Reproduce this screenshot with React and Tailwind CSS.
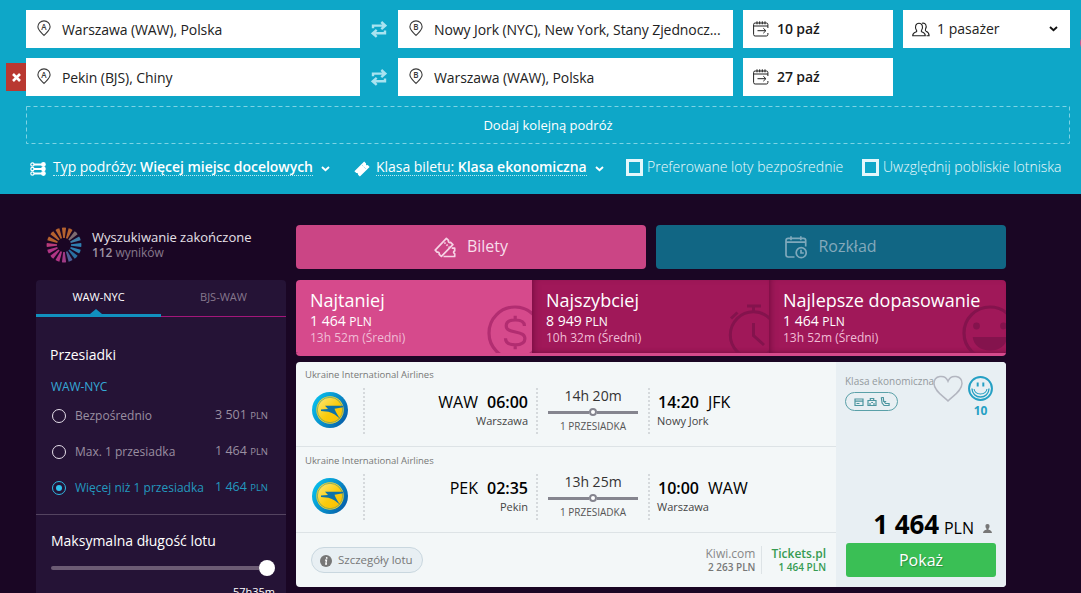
import React from "react";

const stops = [
  { label: "Bezpośrednio", price: "3 501" },
  { label: "Max. 1 przesiadka", price: "1 464" },
  { label: "Więcej niż 1 przesiadka", price: "1 464", active: true },
];

const flights = [
  { from: "WAW", dep: "06:00", fromCity: "Warszawa", time: "14h 20m", arr: "14:20", to: "JFK", toCity: "Nowy Jork" },
  { from: "PEK", dep: "02:35", fromCity: "Pekin", time: "13h 25m", arr: "10:00", to: "WAW", toCity: "Warszawa" },
];

const loaderColors = [
  "#b5622f", "#b5622f", "#7d6b70", "#3f7da6", "#2f7fb0", "#2f7fb0", "#2a6fa0", "#4d5f96",
  "#a03a86", "#b03585", "#b03585", "#b03585", "#b83a7a", "#b5622f", "#b5622f", "#b5622f",
];

const PinIcon = ({ letter }) => (
  <svg width="14" height="17" viewBox="0 0 14 17" fill="none" className="-mt-px shrink-0">
    <path d="M7 .9C3.500 .9 .9 3.500 .9 6.700c0 3.300 3.100 5.400 6.100 8.700 3-3.300 6.100-5.400 6.100-8.700C13.100 3.500 10.500 .9 7 .9z" stroke="#3a3a3a" strokeWidth="1.1" />
    <text x="7" y="9.600" textAnchor="middle" fontSize="8" fontWeight="600" fill="#3a3a3a" fontFamily="Open Sans">
      {letter}
    </text>
  </svg>
);

const SwapIcon = () => (
  <svg width="16" height="17" viewBox="0 0 16 17" fill="none" stroke="#a9e3f0" strokeWidth="2.400" className="shrink-0">
    <path d="M2 7.200V4.600h12M10.300 1l4 3.600-4 3.600M14 9.600v2.700H2M5.700 8.800l-4 3.500 4 3.500" />
  </svg>
);

const CalendarIcon = () => (
  <svg width="16" height="16" viewBox="0 0 16 16" fill="none" stroke="#222" className="shrink-0">
    <path d="M.6 12V3.500q0-1.500 1.500-1.500h11.300q1.500 0 1.500 1.500V7M.6 12v1.500q0 1.500 1.500 1.500h11.300q1.500 0 1.500-1.500V12M.6 5h14.300M4 .3v3M6.700 .3v3M9.300 .3v3M12 .3v3" strokeWidth="1" />
    <path d="M4.500 9.700h8M10.300 7.200l2.600 2.500-2.600 2.500" strokeWidth="1" />
  </svg>
);

const PeopleIcon = () => (
  <svg width="18" height="15" viewBox="0 0 18 15" fill="none" stroke="#222" strokeWidth="1.100" className="shrink-0">
    <path d="M.7 13.700c0-2.500 1.300-2.900 3.300-3.700.8-.4 1-1 .4-1.800C2.600 5.400 3.500 1.200 7 1.200s4.400 4.200 2.600 7c-.5.800-.4 1.400.4 1.800 2 .8 3.300 1.200 3.300 3.700z" />
    <path d="M10 1.300c3.400-.8 5.300 2 3.500 6-.4.900-.2 1.500.6 1.900 1.900.8 3 1.700 3 4.500h-2.600" />
  </svg>
);

const Chevron = ({ color }) => (
  <svg width="9" height="6" viewBox="0 0 9 6" fill="none" className="shrink-0">
    <path d="M1 1l3.500 3.200L8 1" stroke={color} strokeWidth="1.900" />
  </svg>
);

const RouteIcon = () => (
  <svg width="16" height="14" viewBox="0 0 16 14" className="shrink-0">
    <path d="M2.500 2.500h10.500M2.500 7h10.500M2.500 11.500h10.500" stroke="#fff" strokeWidth="2.200" />
    {[2.500, 7, 11.500].map((y) => (
      <g key={y}>
        <circle cx="2.400" cy={y} r="1.600" fill="#0ea7c8" stroke="#fff" strokeWidth="1.200" />
        <circle cx="13.400" cy={y} r="2.400" fill="#fff" />
      </g>
    ))}
  </svg>
);

const TicketIcon = () => (
  <svg width="16" height="16" viewBox="0 0 16 16" className="shrink-0">
    <path d="M.4 10.200L10.200 .5l1.900 1.900c-.5 1.200.5 2.200 1.700 1.700l1.800 1.900-9.700 9.600-1.900-1.800c.5-1.200-.5-2.300-1.700-1.700z" fill="#fff" />
    <path d="M8.300 4.300l3.700 3.700" stroke="#7fcfe2" strokeWidth=".9" strokeDasharray="1.200 1" />
  </svg>
);

const Loader = () => (
  <svg width="36" height="36" viewBox="-18 -18 36 36">
    {loaderColors.map((color, i) => (
      <path key={i} d="M-.8 -7L-2.100 -17.200Q0 -17.700 2.100 -17.200L.8 -7z" fill={color} transform={`rotate(${i * 22.5})`} />
    ))}
  </svg>
);

const TicketsIcon = () => (
  <svg width="22" height="21" viewBox="0 0 22 21" fill="none" stroke="#f6d3e5" strokeWidth="1.700" strokeLinejoin="round">
    <path d="M1.200 13.100L12.400 1.300l2.100 2c-.5 1.500.6 2.600 2.100 2.100l2.300 2.200L7.400 19.400l-2.200-2c.5-1.500-.7-2.700-2.100-2.200z" />
    <path d="M10.400 5.500l4.800 4.700" strokeDasharray="1.600 1.300" />
    <path d="M9.500 19.500h11.200v-2.800c-1.500-.5-1.500-2.300 0-2.800v-2.700h-3" />
  </svg>
);

const ScheduleIcon = () => (
  <svg width="22" height="23" viewBox="0 0 22 23" fill="none" stroke="#7fa9bc" strokeWidth="1.700">
    <path d="M9.500 21H3.200Q1 21 1 18.800V4.500q0-2.200 2.200-2.200h15.300q2.200 0 2.200 2.200v6M1 6.200h19.700M6 .3v4M15.800 .3v4" />
    <circle cx="16.200" cy="16.700" r="5" />
    <path d="M16 13.700v3.300h2.800" />
  </svg>
);

const DollarArt = () => (
  <svg width="56" height="56" viewBox="0 0 56 56" fill="none" stroke="#b22d71" strokeWidth="3.200" className="absolute -right-[11px] top-[25px]">
    <circle cx="28" cy="28" r="26" />
    <path d="M37.500 21c0-3.800-3-6-9.300-6-6 0-9 2.300-9 5.800 0 4 3.200 5 9.200 6.200 6.500 1.300 9.500 2.700 9.500 6.800 0 4.200-3.600 6-9.700 6-6.300 0-9.700-2.400-9.700-6.500M28.200 10.800v4M28.200 39.700v4.500" />
  </svg>
);

const TimerArt = () => (
  <svg width="56" height="56" viewBox="0 0 56 56" fill="none" stroke="#84134d" strokeWidth="3" className="absolute -right-[15px] top-[24px]">
    <circle cx="25.500" cy="31" r="23.200" />
    <path d="M19 2h14M25.500 2v6M3 14.500l6.500-6M25.500 19v12.500L36 41" />
  </svg>
);

const SmileArt = () => (
  <svg width="56" height="56" viewBox="0 0 56 56" className="absolute -right-[12px] top-[25px]">
    <circle cx="28" cy="28" r="26" fill="none" stroke="#84134d" strokeWidth="3.200" />
    <circle cx="14.500" cy="21" r="3.400" fill="#84134d" />
    <circle cx="41.500" cy="21" r="3.400" fill="#84134d" />
    <path d="M10.700 32h34.600c-1 8.700-8 13.500-17.300 13.500S11.700 40.700 10.700 32z" fill="#84134d" />
  </svg>
);

const AirlineLogo = () => (
  <svg width="36" height="36" viewBox="0 0 36 36">
    <defs>
      <linearGradient id="ring" x1="0" y1=".2" x2="1" y2=".8">
        <stop offset="0" stopColor="#08c2ee" />
        <stop offset="1" stopColor="#075ba6" />
      </linearGradient>
      <linearGradient id="disc" x1="0" y1="0" x2="1" y2="1">
        <stop offset="0" stopColor="#fbe97c" />
        <stop offset=".55" stopColor="#fbcb0b" />
        <stop offset="1" stopColor="#f9bd00" />
      </linearGradient>
    </defs>
    <circle cx="18" cy="18" r="18" fill="url(#ring)" />
    <circle cx="18" cy="18" r="13.700" fill="#f5d638" />
    <circle cx="18" cy="18" r="12.700" fill="url(#disc)" stroke="#5f9a6c" strokeWidth=".7" />
    <path d="M13 13.800h18v1.500l-8.500 1.400c1.200 3.300 3.200 6.700 6 10.300-4-3-7.300-6.200-12-7.200L9 19v-1.500l7-.4z" fill="#0d72a8" />
  </svg>
);

const PlaceField = ({ letter, text }) => (
  <>
    <PinIcon letter={letter} />
    <span className="ml-[11px] pt-px text-sm tracking-[-0.09px] whitespace-nowrap text-[#222]">{text}</span>
  </>
);

const TripRow = ({ from, to, date, children }) => (
  <div className="flex h-[38px]">
    <div className="flex w-[334px] items-center bg-white pl-[11px]">
      <PlaceField letter="A" text={from} />
    </div>
    <div className="flex w-[38px] items-center justify-center">
      <SwapIcon />
    </div>
    <div className="flex w-[335px] items-center bg-white pl-[11px]">
      <PlaceField letter="B" text={to} />
    </div>
    <div className="ml-[10px] flex w-[150px] items-center bg-white pl-[10px]">
      <CalendarIcon />
      <span className="ml-2 text-sm font-semibold tracking-[-0.1px] text-[#1a1a1a]">{date}</span>
    </div>
    {children}
  </div>
);

const SearchForm = () => (
  <div className="relative h-[194px] bg-[#0ea7c8] px-[26px] pt-[10px] pr-[11px]">
    <div className="absolute top-[34px] left-[1080px] h-[18px] w-[18px] rounded-full bg-[#d9508a]" />
    <div className="absolute top-[63px] left-[6px] flex h-7 w-5 items-center justify-center bg-[#b93831]">
      <svg width="9" height="9" viewBox="0 0 9 9">
        <path d="M1 1l7 7M8 1L1 8" stroke="#fff" strokeWidth="2.600" />
      </svg>
    </div>
    <div className="flex flex-col gap-[10px]">
      <TripRow from="Warszawa (WAW), Polska" to="Nowy Jork (NYC), New York, Stany Zjednocz..." date="10 paź">
        <div className="ml-[10px] flex w-[167px] items-center bg-white pr-[12px] pl-[9px]">
          <PeopleIcon />
          <span className="ml-[7px] flex-1 text-sm text-[#222]">1 pasażer</span>
          <Chevron color="#111" />
        </div>
      </TripRow>
      <TripRow from="Pekin (BJS), Chiny" to="Warszawa (WAW), Polska" date="27 paź" />
      <div className="relative flex h-[38px] items-center justify-center pt-px text-[13px] text-white">
        <svg width="1044" height="38" className="absolute inset-0">
          <rect x=".5" y=".5" width="1043" height="37" fill="none" stroke="#7dd3e5" strokeDasharray="4 3" />
        </svg>
        Dodaj kolejną podróż
      </div>
    </div>
    <div className="mt-3 flex h-[22px] items-center text-sm whitespace-nowrap text-white">
      <div className="flex w-[323px] items-center pl-1">
        <div className="pt-[3px]"><RouteIcon /></div>
        <span className="ml-[7px] border-b border-dotted border-[#bfeaf3] leading-[17px] tracking-[-0.04px]">
          Typ podróży: <b className="font-semibold">Więcej miejsc docelowych</b>
        </span>
        <span className="ml-2 pt-1"><Chevron color="#fff" /></span>
      </div>
      <div className="flex w-[277px] items-center pl-[5px]">
        <div className="pt-[3px]"><TicketIcon /></div>
        <span className="ml-[6px] border-b border-dotted border-[#bfeaf3] leading-[17px] tracking-[-0.04px]">
          Klasa biletu: <b className="font-semibold">Klasa ekonomiczna</b>
        </span>
        <span className="ml-2 pt-1"><Chevron color="#fff" /></span>
      </div>
      <div className="flex w-[236px] items-center font-light text-[#eefafc]">
        <span className="mr-1 h-[17px] w-[17px] border-[3px] border-[#e4f7fb]" />
        Preferowane loty bezpośrednie
      </div>
      <div className="flex items-center font-light text-[#eefafc]">
        <span className="mr-1 h-[17px] w-[17px] border-[3px] border-[#e4f7fb]" />
        Uwzględnij pobliskie lotniska
      </div>
    </div>
  </div>
);

const Sidebar = () => (
  <aside className="w-[250px] shrink-0">
    <div className="flex h-[55px] pl-[10px]">
      <div className="pt-[2px]"><Loader /></div>
      <div className="ml-[10px] pt-1">
        <p className="text-[13px] leading-[17px] text-[#e6e0e8]">Wyszukiwanie zakończone</p>
        <p className="text-xs leading-[14px] tracking-[-0.05px] text-[#86798c]">
          <b className="font-semibold text-[#9f94a5]">112</b> wyników
        </p>
      </div>
    </div>
    <div className="h-[340px] rounded-t bg-[#251336]">
      <div className="flex h-[37px] text-center text-[11px] leading-[34px]">
        <div className="relative w-[125px] border-b-[3px] border-[#1190bf] text-white">
          WAW-NYC
          <span className="absolute bottom-0 left-[54px] h-0 w-0 border-x-[6px] border-b-[5px] border-x-transparent border-b-[#1190bf]" />
        </div>
        <div className="w-[125px] border-b border-[#a3167a] text-[#85778d]">BJS-WAW</div>
      </div>
      <div className="h-[198px] border-b border-[#544460] px-[15px]">
        <h3 className="-ml-px pt-7 text-sm leading-5 text-white">Przesiadki</h3>
        <p className="mt-3 text-xs leading-5 tracking-[-0.1px] text-[#35a9d6]">WAW-NYC</p>
        <ul className="pt-px text-[13px]">
          {stops.map((s) => (
            <li key={s.label} className={`flex h-9 items-center pb-[1px] ${s.active ? "text-[#2398bf]" : "text-[#9a8fa1]"}`}>
              <span className={`ml-px flex h-[14px] w-[14px] shrink-0 items-center justify-center rounded-full border ${s.active ? "border-[#2fbae3]" : "border-[#e6dfea]"}`}>
                {s.active && <span className="h-[6px] w-[6px] rounded-full bg-[#2fc3ee]" />}
              </span>
              <span className="ml-[9px] flex-1 text-xs whitespace-nowrap">{s.label}</span>
              <span className="mr-[3px] text-[12.5px] whitespace-nowrap">
                {s.price} <small className="text-[9.5px]">PLN</small>
              </span>
            </li>
          ))}
        </ul>
      </div>
      <div className="px-[15px] pt-4">
        <h3 className="text-sm leading-5 text-white">Maksymalna długość lotu</h3>
        <div className="mt-[9px] flex h-4 w-[224px] items-center">
          <span className="h-1 flex-1 rounded-l bg-[#6c5b74]" />
          <span className="h-4 w-4 rounded-full bg-white" />
        </div>
        <p className="mt-2 w-[224px] text-right text-[11px] leading-4 text-white">57h35m</p>
      </div>
    </div>
  </aside>
);

const SortOption = ({ title, price, time, active, children }) => (
  <div className={`relative h-[73px] overflow-hidden pt-[9px] text-white ${active ? "w-[236px] bg-[#d64a8c] pl-[14px]" : "w-[237px] bg-[#a01859] pl-[14px] shadow-[inset_5px_0_7px_-4px_rgba(70,0,40,0.5),inset_0_-4px_5px_-4px_rgba(70,0,40,0.4)]"}`}>
    {children}
    <div className="relative whitespace-nowrap">
      <p className="text-lg leading-[23px]">{title}</p>
      <p className="text-sm leading-[18px]">
        {price} <span className="text-xs">PLN</span>
      </p>
      <p className="text-xs leading-4 text-[#f0bdd6]">{time} (Średni)</p>
    </div>
  </div>
);

const Flight = ({ flight }) => (
  <div className="h-[86px] border-b border-[#dde3e6] pl-[9px]">
    <p className="pt-[8px] text-[9.5px] leading-3 tracking-[-0.03px] text-[#777]">Ukraine International Airlines</p>
    <div className="mt-[7px] flex h-[46px]">
      <div className="w-[58px] pt-1 pl-[7px]"><AirlineLogo /></div>
      <div className="w-0 border-l-2 border-dotted border-[#d5d9dc]" />
      <div className="w-[163px] pt-1 text-right">
        <p className="text-base leading-[21px] text-black">
          {flight.from}<b className="ml-[9px] font-semibold">{flight.dep}</b>
        </p>
        <p className="text-[11px] leading-4 text-[#444]">{flight.fromCity}</p>
      </div>
      <div className="ml-[8px] border-l-2 border-dotted border-[#d5d9dc]" />
      <div className="ml-[10px] w-[90px] text-center">
        <p className="text-sm leading-4 text-[#333]">{flight.time}</p>
        <div className="mt-[4px] flex h-[8px] items-center">
          <span className="h-[3px] flex-1 bg-[#85858f]" />
          <span className="h-[8px] w-[8px] rounded-full border-2 border-[#85858f] bg-white" />
          <span className="h-[3px] flex-1 bg-[#85858f]" />
        </div>
        <p className="mt-[3px] text-[10px] leading-[14px] whitespace-nowrap text-[#555]">1 PRZESIADKA</p>
      </div>
      <div className="ml-[10px] border-l-2 border-dotted border-[#d5d9dc]" />
      <div className="pt-1 pl-[8px]">
        <p className="text-base leading-[21px] text-black">
          <b className="mr-[9px] font-semibold">{flight.arr}</b>{flight.to}
        </p>
        <p className="-ml-px text-[11px] leading-4 text-[#444]">{flight.toCity}</p>
      </div>
    </div>
  </div>
);

const Result = () => (
  <div className="mt-[6px] flex h-[225px] overflow-hidden rounded bg-[#f3f7f8]">
    <div className="w-[540px]">
      <div className="-mt-px">
        {flights.map((f) => <Flight key={f.from} flight={f} />)}
      </div>
      <div className="flex h-[54px] items-center justify-between pr-[10px] pl-[15px]">
        <button className="flex h-[26px] w-[112px] items-center rounded-full border border-[#c9d7df] bg-[#e8eff3] pl-[8px] text-[11.5px] tracking-[-0.02px] text-[#777]">
          <svg width="12" height="12" viewBox="0 0 12 12" className="mt-px mr-[6px]">
            <circle cx="6" cy="6" r="6" fill="#777" />
            <path d="M5 5.200h1.500L5.800 9h1.200" stroke="#fff" strokeWidth="1.300" fill="none" />
            <circle cx="6.700" cy="2.900" r=".9" fill="#fff" />
          </svg>
          Szczegóły lotu
        </button>
        <div className="flex h-[28px] text-right">
          <div className="border-r border-[#dde3e6] pr-[6px]">
            <p className="text-xs leading-[15px] text-[#888]">Kiwi.com</p>
            <p className="text-[10px] leading-[13px] font-semibold text-[#777]">2 263 PLN</p>
          </div>
          <div className="pl-[9px] text-[#369b52]">
            <p className="text-xs leading-[15px] font-semibold">Tickets.pl</p>
            <p className="text-[10px] leading-[13px] font-semibold">1 464 PLN</p>
          </div>
        </div>
      </div>
    </div>
    <div className="flex w-[170px] flex-col justify-between bg-[#e8eff3] px-[10px] pb-[10px]">
      <div className="flex pt-3">
        <div className="w-[87px] whitespace-nowrap">
          <p className="-ml-px text-[10px] leading-[14px] text-[#949a9e]">Klasa ekonomiczna</p>
          <div className="mt-1 -ml-px flex h-[19px] w-[53px] items-center justify-center rounded-full border border-[#5aa0a8]">
            <svg width="38" height="12" viewBox="0 0 38 12" fill="none" stroke="#4c959f" strokeWidth="1.200">
              <path d="M2 3h8v6.500H2zM2 5.200h8M3.500 7.500h3" />
              <path d="M15 4.500h8v5h-8zM17.300 4.500V2.500h3.400v2M17 9.500V7M21 9.500V7M18.200 6.500h1.800" />
              <path d="M28.300 1.500l.8 5.500 2 2.500h5V7.500h-3.500L31 5.500M28.300 1.500h2l.4 4h2.500" />
            </svg>
          </div>
        </div>
        <svg width="30" height="28" viewBox="0 0 30 28" fill="none" stroke="#b3b6c0" strokeWidth="1.500" className="mt-px shrink-0">
          <path d="M15 26C10.500 21.300 1 16 1 8.500c0-8 11-9.800 14-2.200 3-7.600 14-5.800 14 2.200 0 7.500-9.500 12.800-14 17.500z" />
        </svg>
        <div className="ml-[5px] pt-[2px] text-center">
          <svg width="25" height="25" viewBox="0 0 24 24" fill="none" stroke="#25a0c4">
            <circle cx="12" cy="12" r="11" strokeWidth="1.900" />
            <path d="M3.800 12c.2 5 3.700 8.200 8.200 8.200s8-3.200 8.200-8.200" strokeWidth="1.300" />
            <path d="M5.800 12.500c.5 3 3 4.700 6.200 4.700s5.700-1.700 6.200-4.700" strokeWidth="1" />
            <path d="M9.300 6.300v3.800M14.700 6.300v3.800" strokeWidth="1.900" />
          </svg>
          <p className="pt-[2px] text-xs leading-4 font-bold text-[#25a0c4]">10</p>
        </div>
      </div>
      <div>
        <div className="flex items-baseline justify-end pr-[4px] leading-[34px] whitespace-nowrap text-black">
          <b className="text-[26px] font-bold tracking-[-0.1px]">1 464</b>
          <span className="ml-[5px] text-base">PLN</span>
          <svg width="9" height="9" viewBox="0 0 9 9" className="ml-[9px] self-end mb-[8px]">
            <path d="M4.500 0C2.700 0 2.300 1.200 2.500 2.700c.1 1 .5 1.700 1 2.100v.9C1.800 6 0 6.800 0 9h9c0-2.200-1.800-3-3.500-3.300v-.9c.5-.4.900-1.100 1-2.100C6.700 1.200 6.300 0 4.500 0z" fill="#777" />
          </svg>
        </div>
        <button className="mt-[2px] h-[34px] w-full rounded-[3px] bg-[#3abf55] text-base text-white [text-shadow:1px_1px_1px_rgba(0,0,0,0.25)]">
          Pokaż
        </button>
      </div>
    </div>
  </div>
);

const App = () => {
  return (
    <div className="h-[593px] w-[1081px] overflow-hidden bg-[#1a0624] font-['Open_Sans',sans-serif]">
      <SearchForm />
      <div className="flex gap-[10px] pt-[31px] pl-9">
        <Sidebar />
        <main className="w-[710px]">
          <div className="flex gap-[10px] text-base">
            <button className="flex h-11 flex-1 items-center justify-center gap-[11px] rounded bg-[#cb4585] text-[#f8deeb]">
              <TicketsIcon />
              <span className="pb-[3px]">Bilety</span>
            </button>
            <button className="flex h-11 flex-1 items-center justify-center gap-[11px] rounded bg-[#116684] text-[#84a9bb]">
              <ScheduleIcon />
              <span className="pb-[3px]">Rozkład</span>
            </button>
          </div>
          <div className="mt-[11px] flex h-[76px] overflow-hidden rounded border-b-[3px] border-[#d64a8c]">
            <SortOption title="Najtaniej" price="1 464" time="13h 52m" active><DollarArt /></SortOption>
            <SortOption title="Najszybciej" price="8 949" time="10h 32m"><TimerArt /></SortOption>
            <SortOption title="Najlepsze dopasowanie" price="1 464" time="13h 52m"><SmileArt /></SortOption>
          </div>
          <Result />
        </main>
      </div>
    </div>
  );
};

export default App;
